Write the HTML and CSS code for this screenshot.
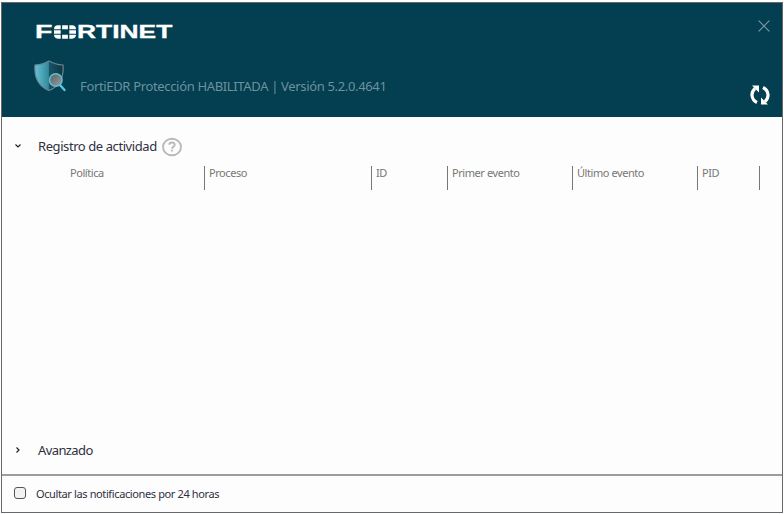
FILE: index.html
```html
<!DOCTYPE html>
<html lang="es">
<head>
<meta charset="utf-8">
<title>FortiEDR</title>
<link rel="stylesheet" href="styles.css">
</head>
<body>
<main class="window">
  <header class="header">
    <div class="brand-column">
      <div class="logo">
        <span class="logo-f">F</span>
        <svg class="logo-mark" width="22" height="14" viewBox="0 0 23 14" fill="#fff"><path d="M4 0h3v4H0C0 1.500 1.500 0 4 0zM8.500 0h6v4h-6zM16 0h3c2.500 0 4 1.500 4 4h-7zM0 5.300h7v3.400H0zM16 5.300h7v3.400h-7zM0 10h7v4H4c-2.500 0-4-1.500-4-4zM8.500 10h6v4h-6zM16 10h7c0 2.500-1.500 4-4 4h-3z"/></svg>
        <span class="logo-rest">RTINET</span>
      </div>
      <div class="status">
        <svg class="shield" width="34" height="34" viewBox="0 0 34 34">
          <defs>
            <linearGradient id="g"><stop offset="0" stop-color="#62c4d6"/><stop offset=".48" stop-color="#36899d"/><stop offset=".5" stop-color="#175568"/><stop offset="1" stop-color="#0c3542"/></linearGradient>
            <linearGradient id="l" x2="1" y2="1"><stop offset="0" stop-color="#555f65"/><stop offset="1" stop-color="#9a9fa2"/></linearGradient>
          </defs>
          <path d="M1 5Q9 4.500 15 1Q21 4.500 29 5C30 17 26 26 15 30.500C4 26 0 17 1 5z" fill="url(#g)" stroke="#6b8791" stroke-width="1.200"/>
          <path d="M26 25l4.500 5" stroke="#55c8e2" stroke-width="2.400" stroke-linecap="round"/>
          <circle cx="21.800" cy="20" r="6.300" fill="url(#l)" stroke="#62bfd1" stroke-width="1.500"/>
        </svg>
        <span class="status-text">FortiEDR Protección HABILITADA | Versión 5.2.0.4641</span>
      </div>
    </div>
    <div class="actions">
      <svg width="12" height="12" viewBox="0 0 12 12" stroke="#7b9ba6" stroke-width="1.200"><path d="M.7.700l10.600 10.600M11.300.700L.7 11.300"/></svg>
      <svg class="refresh" width="20" height="20" viewBox="0 0 20 20"><path d="M7 17.500C1 14.500 .5 7.500 5 3.500M13 2.500C19 5.500 19.500 12.500 15 16.500" fill="none" stroke="#fff" stroke-width="3.200"/><path d="M2 .500H9v7zM18 19.500H11v-7z" fill="#fff"/></svg>
    </div>
  </header>
  <section class="activity">
    <h1 class="section-title">
      <svg class="chevron" width="6" height="6" viewBox="0 0 6 6"><path d="M.5 1.500L3 4l2.500-2.500"/></svg>
      <span class="title-text title-activity">Registro de actividad</span>
      <svg class="help" width="20" height="20" viewBox="0 0 20 20" fill="none" stroke="#b9b9b9"><ellipse cx="10" cy="10" rx="9" ry="8.300" stroke-width="1.900"/><path d="M7.300 7.800C7.300 4.700 12.700 4.700 12.700 7.700C12.700 9.700 10 9.700 10 11.700M10 12.800v1.800" stroke-width="1.900"/></svg>
    </h1>
    <div class="columns">
      <span>Política</span><span>Proceso</span><span>ID</span><span>Primer evento</span><span>Último evento</span><span>PID</span><span></span>
    </div>
  </section>
  <section class="section-title advanced">
    <svg class="chevron" width="6" height="6" viewBox="0 0 6 6"><path d="M1.500.500L4 3 1.500 5.500"/></svg>
    <span class="title-text title-advanced">Avanzado</span>
  </section>
  <footer class="footer">
    <label class="option"><input class="box" type="checkbox"><span class="option-text">Ocultar las notificaciones por 24 horas</span></label>
  </footer>
</main>
</body>
</html>
```
FILE: styles.css
```css
* { box-sizing: border-box; }
body { margin: 0; padding: 2px 1px 1px; height: 514px; background: #fff; font-family: "Noto Sans", sans-serif; }
.window { display: flex; flex-direction: column; width: 782px; height: 511px; border: 1px solid #66696b; background: #fdfdfd; }
.header { display: flex; justify-content: space-between; height: 114px; flex: none; background: #033e51; }
.brand-column { padding: 22px 0 0 34px; }
.logo { display: flex; height: 14px; color: #fff; font: bold 19px/14px "Liberation Sans", sans-serif; -webkit-text-stroke: .3px #fff; }
.logo-f { width: 18px; margin-left: -1px; transform: scaleX(1.500); transform-origin: 0 50%; }
.logo-mark { flex: none; margin: 0 1px 0 1px; }
.logo-rest { transform: scaleX(1.390); transform-origin: 0 50%; }
.status { display: flex; margin: 21px 0 0 -2px; }
.shield { flex: none; }
.status-text { margin: 17px 0 0 12px; font-size: 13px; line-height: 18px; letter-spacing: -.34px; color: #6d929d; white-space: nowrap; }
.actions { display: flex; flex-direction: column; align-items: flex-end; padding: 17px 12px 0 0; }
.refresh { margin: 53px 0 0; }
.activity { flex: none; height: 315px; padding-top: 19px; }
.section-title { display: flex; align-items: center; height: 20px; margin: 0; padding-left: 13px; font-size: 13px; font-weight: 400; color: #303040; }
.chevron { fill: none; stroke: #222; stroke-width: 1.200; }
.title-text { margin-left: 17px; line-height: 18px; white-space: nowrap; }
.title-activity { width: 119px; letter-spacing: -.42px; }
.title-advanced { letter-spacing: -.6px; }
.help { margin: 2px 0 0 5px; }
.columns { display: grid; grid-template-columns: 137px 167px 76px 125px 125px 62px 1px; height: 24px; margin: 10px 0 0 65px; font-size: 11px; line-height: 14px; letter-spacing: -.43px; color: #777; }
.columns span { border-left: 1px solid #777; padding-left: 4px; white-space: nowrap; }
.columns span:first-child { border-left: 0; padding-left: 3px; }
.advanced { margin-top: 8px; }
.footer { margin-top: auto; height: 38px; border-top: 2px solid #9d9d9d; }
.option { display: flex; align-items: center; height: 34px; padding-left: 12px; }
.box { appearance: none; width: 12px; height: 12px; margin: 0; border: 1px solid #555; border-radius: 3px; background: #f3f3f3; }
.option-text { margin: 2px 0 0 10px; font-size: 11px; line-height: 16px; letter-spacing: -.38px; color: #303040; white-space: nowrap; }
```
